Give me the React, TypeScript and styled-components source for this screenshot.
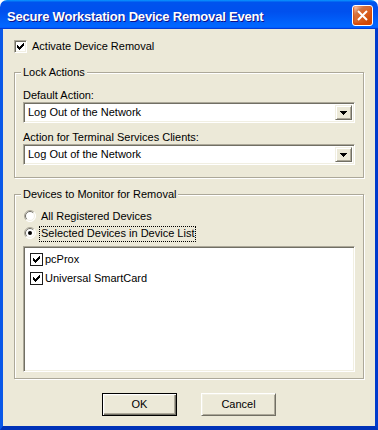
import React from "react";
import styled, { createGlobalStyle, css } from "styled-components";

const GlobalStyle = createGlobalStyle`
  html, body { margin: 0; padding: 0; background: #ffffff; }
  body { font-family: "Liberation Sans", Arial, sans-serif; font-size: 11px; color: #000; }
  * { box-sizing: border-box; }
`;

const Window = styled.div`
  width: 378px;
  height: 430px;
  display: flex;
  flex-direction: column;
`;

const TitleBar = styled.div`
  height: 29px;
  flex: none;
  display: flex;
  align-items: flex-start;
  justify-content: space-between;
  padding: 0 5px 0 7px;
  border-radius: 7px 7px 0 0;
  background: linear-gradient(180deg, #0997ff 0%, #0053ee 8%, #0050ee 40%, #0066ff 88%, #0066ff 93%, #005bff 95%, #003dd7 96%, #003dd7 100%);
`;

const TitleText = styled.div`
  padding-top: 10px;
  font-family: "Liberation Sans", Arial, sans-serif;
  font-weight: bold;
  font-size: 13px;
  letter-spacing: -0.2px;
  line-height: 13px;
  color: #fff;
  text-shadow: 1px 1px 0 #0f1089;
  white-space: nowrap;
`;

const CloseButton = styled.div`
  margin-top: 5px;
  width: 21px;
  height: 21px;
  border: 1px solid #fff;
  border-radius: 3px;
  background: radial-gradient(circle at 90% 90%, #cc4600 0%, #dc6527 55%, #cd7546 70%, #ffccb2 90%, #fff 100%);
  box-shadow: inset 0 -1px 2px 1px #da4600;
  display: flex;
  align-items: center;
  justify-content: center;
`;

const Frame = styled.div`
  flex: 1;
  display: flex;
  flex-direction: column;
  background: #ece9d8;
  border-left: 3px solid #0a58e8;
  border-right: 3px solid #003bcc;
  border-bottom: 4px solid #0032b8;
  padding: 11px 11px 0 11px;
`;

const CheckRow = styled.label`
  display: flex;
  align-items: center;
  height: 13px;
  line-height: 13px;
  gap: 5px;
`;

const CheckBox = styled.span<{ $flat?: boolean }>`
  flex: none;
  width: 13px;
  height: 13px;
  background: #fff;
  display: flex;
  align-items: center;
  justify-content: center;
  ${(p) =>
    p.$flat
      ? css`
          border: 1px solid #1c1c1c;
        `
      : css`
          border: 1px solid;
          border-color: #aca899 #ffffff #ffffff #aca899;
          box-shadow: inset 1px 1px 0 #716f64, inset -1px -1px 0 #f1efe2;
        `}
`;

const GroupBox = styled.div<{ $top: number }>`
  position: relative;
  margin-top: ${(p) => p.$top}px;
  border: 1px solid #aca899;
  box-shadow: inset 1px 1px 0 #fff, 1px 1px 0 #fff;
  display: flex;
  flex-direction: column;
`;

const LockBody = styled.div`
  padding: 16px 8px 12px 8px;
  display: flex;
  flex-direction: column;
`;

const DevicesBody = styled.div`
  padding: 14px 8px 6px 8px;
  display: flex;
  flex-direction: column;
`;

const Legend = styled.div`
  position: absolute;
  top: -7px;
  left: 6px;
  padding: 0 2px;
  line-height: 13px;
  background: #ece9d8;
  white-space: nowrap;
`;

const FieldLabel = styled.div<{ $gap?: number }>`
  height: 13px;
  line-height: 13px;
  margin-top: ${(p) => p.$gap ?? 0}px;
  white-space: nowrap;
`;

const Sunken = css`
  border: 1px solid;
  border-color: #aca899 #ffffff #ffffff #aca899;
  box-shadow: inset 1px 1px 0 #716f64, inset -1px -1px 0 #f1efe2;
`;

const Combo = styled.div`
  height: 21px;
  ${Sunken};
  padding: 2px;
  background: #fff;
  display: flex;
  align-items: stretch;
`;

const ComboText = styled.div`
  flex: 1;
  padding-left: 2px;
  line-height: 15px;
  white-space: nowrap;
`;

const DropButton = styled.div`
  width: 17px;
  flex: none;
  background: #ece9d8;
  border: 1px solid;
  border-color: #f1efe2 #716f64 #716f64 #f1efe2;
  box-shadow: inset 1px 1px 0 #fff, inset -1px -1px 0 #aca899;
  display: flex;
  align-items: center;
  justify-content: center;
`;

const RadioRow = styled.div`
  height: 17px;
  display: flex;
  align-items: flex-start;
`;

const RadioMark = styled.svg`
  flex: none;
  margin: 1px 3px 0 1px;
`;

const RadioLabel = styled.span<{ $focus?: boolean }>`
  height: 16px;
  padding: 0 1px 1px 1px;
  line-height: 13px;
  border: 1px dotted ${(p) => (p.$focus ? "#000" : "transparent")};
  white-space: nowrap;
`;

const ListBox = styled.div`
  margin-top: 3px;
  height: 126px;
  ${Sunken};
  background: #fff;
  padding: 3px 2px 2px 6px;
  display: flex;
  flex-direction: column;
`;

const ListItem = styled.div`
  height: 19px;
  display: flex;
  align-items: center;
  gap: 2px;
  line-height: 13px;
  white-space: nowrap;
`;

const ButtonRow = styled.div`
  margin-top: 14px;
  display: flex;
  justify-content: center;
  gap: 24px;
`;

const PushButton = styled.div<{ $default?: boolean }>`
  width: 75px;
  height: 23px;
  background: #ece9d8;
  display: flex;
  align-items: center;
  justify-content: center;
  line-height: 13px;
  ${(p) =>
    p.$default
      ? css`
          border: 1px solid #000;
          box-shadow: inset 1px 1px 0 #fff, inset -1px -1px 0 #716f64, inset -2px -2px 0 #aca899, inset 2px 2px 0 #f1efe2;
        `
      : css`
          border: 1px solid;
          border-color: #fff #716f64 #716f64 #fff;
          box-shadow: inset 1px 1px 0 #f1efe2, inset -1px -1px 0 #aca899;
        `}
`;

const CheckGlyph = () => (
  <svg width="7" height="7" viewBox="0 0 7 7" shapeRendering="crispEdges">
    <rect x="6" y="0" width="1" height="1" fill="#000" />
    <rect x="5" y="1" width="2" height="1" fill="#000" />
    <rect x="0" y="2" width="1" height="1" fill="#000" />
    <rect x="4" y="2" width="3" height="1" fill="#000" />
    <rect x="0" y="3" width="2" height="1" fill="#000" />
    <rect x="3" y="3" width="3" height="1" fill="#000" />
    <rect x="0" y="4" width="5" height="1" fill="#000" />
    <rect x="1" y="5" width="3" height="1" fill="#000" />
    <rect x="2" y="6" width="1" height="1" fill="#000" />
  </svg>
);

const Radio = ({ checked }: { checked?: boolean }) => (
  <RadioMark width="12" height="12" viewBox="0 0 12 12">
    <circle cx="6" cy="6" r="5.5" fill="#fff" />
    <path d="M2.1 9.9 A5.5 5.5 0 0 1 9.9 2.1" stroke="#aca899" fill="none" />
    <path d="M9.9 2.1 A5.5 5.5 0 0 1 2.1 9.9" stroke="#ffffff" fill="none" />
    <path d="M2.8 9.2 A4.5 4.5 0 0 1 9.2 2.8" stroke="#716f64" fill="none" />
    <path d="M9.2 2.8 A4.5 4.5 0 0 1 2.8 9.2" stroke="#f1efe2" fill="none" />
    {checked && <circle cx="6" cy="6" r="2" fill="#000" />}
  </RadioMark>
);

const Arrow = () => (
  <svg width="7" height="4" viewBox="0 0 7 4" shapeRendering="crispEdges">
    <rect x="0" y="0" width="7" height="1" fill="#000" />
    <rect x="1" y="1" width="5" height="1" fill="#000" />
    <rect x="2" y="2" width="3" height="1" fill="#000" />
    <rect x="3" y="3" width="1" height="1" fill="#000" />
  </svg>
);

export default function App() {
  return (
    <>
      <GlobalStyle />
      <Window>
        <TitleBar>
          <TitleText>Secure Workstation Device Removal Event</TitleText>
          <CloseButton>
            <svg width="11" height="11" viewBox="0 0 11 11">
              <path d="M1 1 L10 10 M10 1 L1 10" stroke="#fff" strokeWidth="2" />
            </svg>
          </CloseButton>
        </TitleBar>
        <Frame>
          <CheckRow>
            <CheckBox>
              <CheckGlyph />
            </CheckBox>
            Activate Device Removal
          </CheckRow>

          <GroupBox $top={19}>
            <Legend>Lock Actions</Legend>
            <LockBody>
              <FieldLabel>Default Action:</FieldLabel>
              <Combo>
                <ComboText>Log Out of the Network</ComboText>
                <DropButton>
                  <Arrow />
                </DropButton>
              </Combo>
              <FieldLabel $gap={8}>Action for Terminal Services Clients:</FieldLabel>
              <Combo>
                <ComboText>Log Out of the Network</ComboText>
                <DropButton>
                  <Arrow />
                </DropButton>
              </Combo>
            </LockBody>
          </GroupBox>

          <GroupBox $top={16}>
            <Legend>Devices to Monitor for Removal</Legend>
            <DevicesBody>
              <RadioRow>
                <Radio />
                <RadioLabel>All Registered Devices</RadioLabel>
              </RadioRow>
              <RadioRow>
                <Radio checked />
                <RadioLabel $focus>Selected Devices in Device List</RadioLabel>
              </RadioRow>
              <ListBox>
                <ListItem>
                  <CheckBox $flat>
                    <CheckGlyph />
                  </CheckBox>
                  pcProx
                </ListItem>
                <ListItem>
                  <CheckBox $flat>
                    <CheckGlyph />
                  </CheckBox>
                  Universal SmartCard
                </ListItem>
              </ListBox>
            </DevicesBody>
          </GroupBox>

          <ButtonRow>
            <PushButton $default>OK</PushButton>
            <PushButton>Cancel</PushButton>
          </ButtonRow>
        </Frame>
      </Window>
    </>
  );
}
